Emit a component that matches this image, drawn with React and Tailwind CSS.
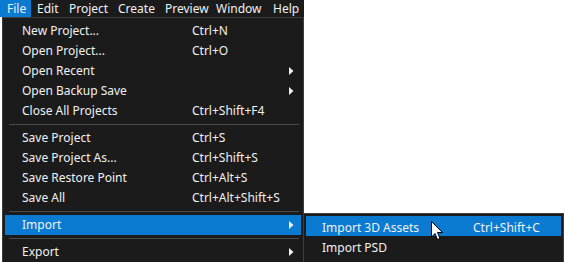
import React from 'react';

const topMenus = [
  { label: 'File', w: 'w-[31px] pl-[7px]' },
  { label: 'Edit', w: 'w-[32px] pl-[6px]' },
  { label: 'Project', w: 'w-[49px] pl-[6px]' },
  { label: 'Create', w: 'w-[47px] pl-[6px]' },
  { label: 'Preview', w: 'w-[51px] pl-[6px]' },
  { label: 'Window', w: 'w-[57px] pl-[6px]' },
  { label: 'Help', w: 'w-[37px] pl-[6px]' },
];

const fileMenu = [
  { label: 'New Project...', shortcut: 'Ctrl+N' },
  { label: 'Open Project...', shortcut: 'Ctrl+O' },
  { label: 'Open Recent', sub: true },
  { label: 'Open Backup Save', sub: true },
  { label: 'Close All Projects', shortcut: 'Ctrl+Shift+F4' },
  { sep: true },
  { label: 'Save Project', shortcut: 'Ctrl+S' },
  { label: 'Save Project As...', shortcut: 'Ctrl+Shift+S' },
  { label: 'Save Restore Point', shortcut: 'Ctrl+Alt+S' },
  { label: 'Save All', shortcut: 'Ctrl+Alt+Shift+S' },
  { sep: true },
  { label: 'Import', sub: true, active: true },
  { sep: true },
  { label: 'Export', sub: true },
];

const importMenu = [
  { label: 'Import 3D Assets', shortcut: 'Ctrl+Shift+C', active: true },
  { label: 'Import PSD' },
];

const Arrow = () => (
  <svg width="5" height="8" viewBox="0 0 5 8" className="block">
    <path d="M0 0 L4.5 4 L0 8 Z" fill="#f0f0f0" />
  </svg>
);

const Cursor = () => (
  <svg width="13" height="20" viewBox="0 0 13 20" className="absolute left-[431px] top-[221px]">
    <path d="M0.5 0.5 L0.5 16 L4 12.5 L6.5 18.5 L9 17.5 L6.5 11.5 L11.5 11.5 Z" fill="#fff" stroke="#000" strokeWidth="1" strokeLinejoin="miter" />
  </svg>
);

export default function App() {
  return (
    <div className="relative w-[565px] h-[262px] bg-white overflow-hidden text-[12px] text-[#f1f1f1]" style={{ fontFamily: '"Noto Sans", "Open Sans", sans-serif' }}>
      {/* menu bar */}
      <div className="flex w-[304px] h-[17px] bg-[#1b1b1b] items-center">
        {topMenus.map((m, i) => (
          <div
            key={m.label}
            className={`h-full shrink-0 flex items-center whitespace-nowrap leading-none text-[12px] ${m.w} ${i === 0 ? 'bg-[#0a7bd0]' : ''}`}
          >
            {m.label}
          </div>
        ))}
      </div>

      {/* file dropdown */}
      <div className="absolute left-[2px] top-[17px] w-[302px] h-[260px] bg-[#1b1b1b] border border-[#3d3d3d] pt-[3px] px-[2px]">
        {fileMenu.map((it, i) =>
          it.sep ? (
            <div key={i} className="h-[7px] flex items-center pl-[4px] pr-[2px]">
              <div className="h-px w-full bg-[#4a4a4a]" />
            </div>
          ) : (
            <div
              key={i}
              className={`h-[20px] flex items-center ${it.active ? 'bg-[#0a7bd0]' : ''}`}
            >
              <span className="pl-[17px] w-[187px] whitespace-nowrap">{it.label}</span>
              <span className="flex-1 whitespace-nowrap">{it.shortcut}</span>
              {it.sub && (
                <span className="pr-[7px]">
                  <Arrow />
                </span>
              )}
            </div>
          )
        )}
      </div>

      {/* import submenu */}
      <div className="absolute left-[303px] top-[213px] w-[261px] h-[60px] bg-[#1b1b1b] border border-[#3d3d3d] pt-[2px] px-[2px]">
        {importMenu.map((it, i) => (
          <div
            key={i}
            className={`h-[20px] flex items-center pt-[3px] ${it.active ? 'bg-[#0a7bd0]' : ''}`}
          >
            <span className="pl-[16px] w-[167px] whitespace-nowrap">{it.label}</span>
            <span className="whitespace-nowrap">{it.shortcut}</span>
          </div>
        ))}
      </div>

      <Cursor />
    </div>
  );
}
